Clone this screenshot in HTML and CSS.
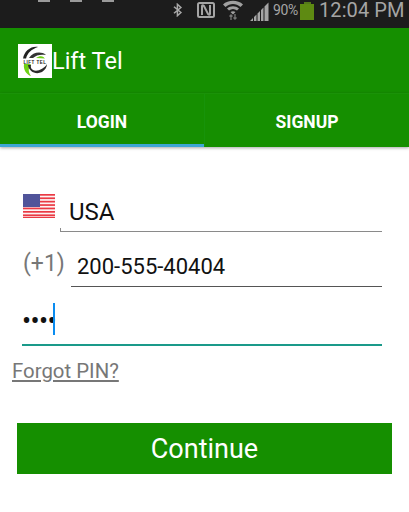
FILE: index.html
```html
<!DOCTYPE html>
<html lang="en">
<head>
<meta charset="utf-8">
<title>Lift Tel</title>
<link rel="stylesheet" href="styles.css">
</head>
<body>
<div class="status">
  <div class="cutoff"><i></i><i></i><i></i></div>
  <svg class="ic-bt" width="10" height="14" viewBox="0 0 10 17" preserveAspectRatio="none"><path d="M1 4.500l7 7-3.600 4V1.500L8 5.500l-7 7" fill="none" stroke="#a8a8a8" stroke-width="1.500"/></svg>
  <svg class="ic-nfc" width="18" height="16" viewBox="0 0 18 16"><path d="M1 2.500Q1 1 2.500 1H15.500Q17 1 17 2.500V13.500Q17 15 15.500 15H2.500Q1 15 1 13.500Z" fill="#1c1c1c" stroke="#a5a5a5" stroke-width="2"/><path d="M5 13V4c0-1 1-1 2 0l4 8c1 1 2 1 2 0V3" fill="none" stroke="#a5a5a5" stroke-width="2"/></svg>
  <svg class="ic-wifi" width="20" height="20" viewBox="0 0 20 20"><path d="M0 4.500C5-.5 15-.5 20 4.500L17.500 7C13 3 7 3 2.500 7ZM4 8.500C7.500 5.500 12.500 5.500 16 8.500L14 10.500C11.500 8.500 8.500 8.500 6 10.500ZM7.500 12C9 11 11 11 12.500 12L10 14.500Z" fill="#a0a0a0"/><path d="M8 20v-5M6.500 16.500L8 15l1.500 1.500M12 14v5M10.500 17.500L12 19l1.500-1.500" fill="none" stroke="#777" stroke-width="1.300"/></svg>
  <svg class="ic-sig" width="19" height="19" viewBox="0 0 19 19"><path d="M0 19L3 16V19ZM4 19V15L6.500 12.500V19ZM7.500 19V11.500L10 9V19ZM11 19V8L13.500 5.500V19ZM14.500 19V4.500L18.500 0.500V19Z" fill="#a5a5a5"/></svg>
  <span class="pct">90%</span>
  <div class="battery"><b></b><span></span></div>
  <span class="clock">12:04 PM</span>
</div>
<header class="appbar">
  <svg class="logo" width="34" height="34" viewBox="0 0 34 34">
    <rect width="34" height="34" fill="#fff"/>
    <path d="M5 15C6 7 13 2 20 3C14 5 9 9 8 15Z" fill="#222"/>
    <path d="M11 14C15 8 23 7 28 11C23 10 18 11 15 14Z" fill="#333"/>
    <path d="M18 14C22 11 26 12 27 15Z" fill="#6fd016"/>
    <path d="M6 20C5 26 9 31 13 32C10 28 10 24 13 20Z" fill="#6fd016"/>
    <path d="M10 21C11 28 18 31 24 28C27 26 29 23 29 20C26 25 19 28 15 26C13 25 12.500 23 13 21Z" fill="#2a2a2a"/>
    <rect x="2" y="14.500" width="30" height="5.500" fill="#fff"/>
    <text class="logo-text" x="17" y="19.500" text-anchor="middle">LIFT TEL</text>
  </svg>
  <h1 class="title">Lift Tel</h1>
</header>
<nav class="tabs">
  <div class="tab active">LOGIN</div>
  <div class="tab">SIGNUP</div>
</nav>
<main class="form">
  <div class="row row-country">
    <svg class="flag" width="32" height="24" viewBox="0 0 32 24">
      <rect width="32" height="24" fill="#fdf3f3"/>
      <g fill="#ea3a44"><rect y="0" width="32" height="1.700"/><rect y="3.400" width="32" height="1.700"/><rect y="6.800" width="32" height="1.700"/><rect y="10.200" width="32" height="1.700"/><rect y="13.600" width="32" height="1.700"/><rect y="17" width="32" height="1.700"/><rect y="20.400" width="32" height="1.700"/><rect y="22.800" width="32" height="1.200"/></g>
      <rect width="17" height="13" fill="#50549a"/>
    </svg>
    <div class="field field-country">USA</div>
  </div>
  <div class="row row-phone">
    <span class="code">(+1)</span>
    <div class="field field-phone">200-555-40404</div>
  </div>
  <div class="field-pin"><span class="dots">••••</span><span class="caret"></span></div>
  <a class="forgot" href="#">Forgot PIN?</a>
  <button class="continue" type="button">Continue</button>
</main>
</body>
</html>
```
FILE: styles.css
```css
* { box-sizing: border-box; }
html, body { margin: 0; padding: 0; background: #fff; }
body { width: 409px; height: 512px; overflow: hidden; font-family: Roboto, sans-serif; }

.status { height: 28px; background: #1c1c1c; display: flex; align-items: center; position: relative; color: #a5a5a5; padding-bottom: 8px; }
.cutoff { position: absolute; left: 38px; top: 0; display: flex; gap: 20px; }
.cutoff i { width: 12px; height: 2px; background: #9a9a9a; display: block; }
.ic-bt { margin-left: 173px; }
.ic-nfc { margin-left: 14px; }
.ic-wifi { margin-left: 8px; }
.ic-sig { margin-left: 7px; margin-top: 2px; }
.pct { font-size: 14px; margin-left: 4px; width: 25px; letter-spacing: -0.4px; }
.battery { width: 14px; height: 18px; margin-left: 2px; margin-top: 2px; display: flex; flex-direction: column; align-items: center; }
.battery b { width: 7px; height: 2px; background: #55791a; display: block; }
.battery span { width: 14px; height: 16px; background: #5e8a12; display: block; }
.clock { font-size: 20px; line-height: 18px; margin-left: 5px; white-space: nowrap; letter-spacing: 0.1px; }

.appbar { height: 65px; background: #158f00; display: flex; align-items: center; padding-left: 18px; }
.logo { display: block; }
.logo-text { font: 700 4.5px "Liberation Sans", sans-serif; fill: #222; letter-spacing: 0.5px; }
.title { margin: 0; font-size: 23.5px; font-weight: 400; color: #fff; line-height: 1; padding-top: 2px; }

.tabs { height: 54px; background: #158f00; display: flex; box-shadow: 0 1px 3px rgba(0,0,0,.35); border-top: 1px solid #1a9208; }
.tab { flex: 1; display: flex; align-items: center; justify-content: center; color: #fff; font-size: 17.500px; font-weight: 700; padding-top: 2px; border-left: 1px solid #17930a; }
.tab.active { border-left: 0; border-bottom: 3px solid #3ea6d6; padding-top: 5px; }

.form { padding-top: 47px; }
.row { display: flex; align-items: flex-start; }
.row-country { padding-left: 23px; height: 56px; }
.row-phone { padding-left: 23px; height: 53px; }
.flag { display: block; margin-right: 5px; }
.field { height: 37px; font-size: 22px; color: #111; border-bottom: 1px solid #8a8a8a; width: 322px; }
.field-country { margin-top: 1px; padding-left: 9px; line-height: 34px; font-size: 24px; position: relative; }
.field-country::before { content: ""; position: absolute; left: 0; bottom: 0; height: 3px; width: 1px; background: #8a8a8a; }
.field-phone { width: 311px; margin-left: 6px; padding-left: 6px; line-height: 34px; border-bottom-color: #555; }
.code { font-size: 23px; color: #777; line-height: 28px; width: 42px; }
.field-pin { margin-left: 22px; width: 360px; height: 43px; border-bottom: 2px solid #1a9a8a; display: flex; align-items: flex-start; }
.dots { font-size: 27px; line-height: 36px; color: #111; letter-spacing: -0.6px; width: 31px; white-space: nowrap; }
.caret { width: 2px; height: 32px; background: #0a8cf0; }
.forgot { display: inline-block; margin: 13px 0 0 12px; font-size: 20.400px; color: #777; text-decoration: underline; line-height: 24px; }
.continue { display: block; margin: 40px 0 0 17px; width: 375px; height: 51px; border: 0; background: #158f00; color: #fff; font: 400 27px Roboto, sans-serif; padding: 0; }
```
